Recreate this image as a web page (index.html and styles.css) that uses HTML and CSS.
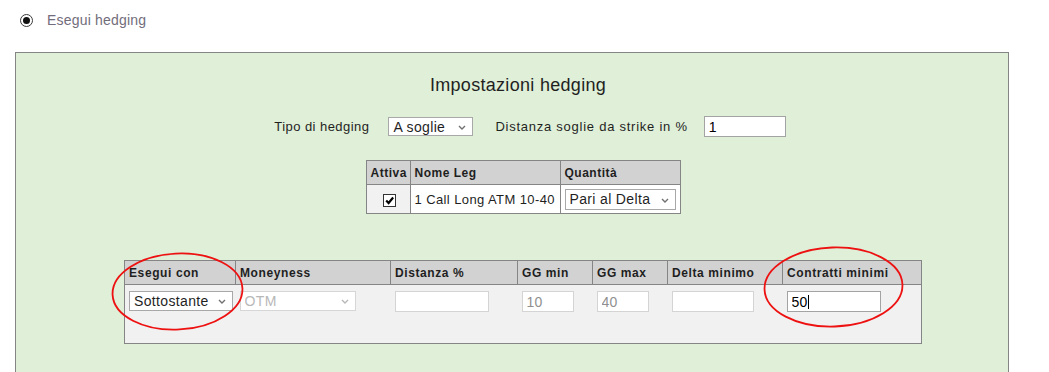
FILE: index.html
```html
<!DOCTYPE html>
<html lang="it">
  <head>
    <meta charset="UTF-8">
    <title>Impostazioni hedging</title>
    <link rel="stylesheet" href="styles.css">
  </head>
  <body>
    <div class="choice">
      <span class="radio"><span class="dot"></span></span>
      <span class="choice-label">Esegui hedging</span>
    </div>

    <div class="panel">
      <h2 class="panel-title">Impostazioni hedging</h2>

      <div class="settings-row">
        <span class="label">Tipo di hedging</span>
        <span class="select-box w-tipo">
          <select><option>A soglie</option></select>
          <svg class="chev" viewBox="0 0 8 5"><path d="M1 1 L4 4 L7 1" /></svg>
        </span>
        <span class="label wide">Distanza soglie da strike in %</span>
        <input class="text-input w-soglie" type="text" value="1">
      </div>

      <table class="legs">
        <thead>
          <tr>
            <th class="c-attiva">Attiva</th>
            <th class="c-nome">Nome Leg</th>
            <th class="c-qta">Quantità</th>
          </tr>
        </thead>
        <tbody>
          <tr>
            <td class="c-attiva check-cell">
              <span class="checkbox">
                <svg viewBox="0 0 10 10"><path d="M2 5 L4.2 7.3 L8.3 2.3" /></svg>
              </span>
            </td>
            <td class="c-nome">1 Call Long ATM 10-40</td>
            <td class="c-qta">
              <span class="select-box w-qta">
                <select><option>Pari al Delta</option></select>
                <svg class="chev" viewBox="0 0 8 5"><path d="M1 1 L4 4 L7 1" /></svg>
              </span>
            </td>
          </tr>
        </tbody>
      </table>

      <div class="hedge-wrap">
        <table class="hedge">
          <thead>
            <tr>
              <th class="h-esegui">Esegui con</th>
              <th class="h-money">Moneyness</th>
              <th class="h-dist">Distanza %</th>
              <th class="h-ggmin">GG min</th>
              <th class="h-ggmax">GG max</th>
              <th class="h-delta">Delta minimo</th>
              <th class="h-contr">Contratti minimi</th>
            </tr>
          </thead>
          <tbody>
            <tr>
              <td>
                <span class="select-box w-esegui">
                  <select><option>Sottostante</option></select>
                  <svg class="chev" viewBox="0 0 8 5"><path d="M1 1 L4 4 L7 1" /></svg>
                </span>
              </td>
              <td>
                <span class="select-box w-money disabled">
                  <select disabled><option>OTM</option></select>
                  <svg class="chev" viewBox="0 0 8 5"><path d="M1 1 L4 4 L7 1" /></svg>
                </span>
              </td>
              <td><input class="text-input light w-dist" type="text" value=""></td>
              <td><input class="text-input light muted w-gg" type="text" value="10" disabled></td>
              <td><input class="text-input light muted w-gg" type="text" value="40" disabled></td>
              <td><input class="text-input light w-delta" type="text" value=""></td>
              <td>
                <span class="caret-box">
                  <input class="text-input w-contr" type="text" value="50">
                  <span class="caret"></span>
                </span>
              </td>
            </tr>
          </tbody>
        </table>

        <!-- annotation marks drawn over the table -->
        <svg class="marks" viewBox="0 0 840 120" width="840" height="120">
          <ellipse cx="73.5" cy="51.5" rx="65" ry="38" transform="rotate(-3 73.5 51.5)" />
          <ellipse cx="729.5" cy="47" rx="69" ry="39.5" transform="rotate(-2 729.5 47)" />
        </svg>
      </div>
    </div>
  </body>
</html>
```

FILE: styles.css
```css
:root {
  --panel-bg: #dfefd8;
  --panel-border: #858585;
  --head-bg: #d2d2d2;
  --row-bg: #f1f1f1;
  --text: #1f1f1f;
}

html, body {
  margin: 0;
  padding: 0;
  background: #ffffff;
  color: var(--text);
  font-family: "Liberation Sans", Arial, sans-serif;
  font-size: 13px;
  overflow: hidden;
}

/* top radio choice */
.choice {
  display: flex;
  align-items: center;
  height: 24px;
  padding: 8px 0 0 20px;
}

.radio {
  width: 11px;
  height: 11px;
  border: 1px solid #3a3a3a;
  border-radius: 50%;
  display: flex;
  align-items: center;
  justify-content: center;
  background: #fff;
}

.radio .dot {
  width: 7px;
  height: 7px;
  border-radius: 50%;
  background: #111;
}

.choice-label {
  margin-left: 14px;
  font-size: 14px;
  letter-spacing: 0.2px;
  color: #726d7b;
}

/* green panel */
.panel {
  margin: 20px 0 0 15px;
  width: 994px;
  min-height: 330px;
  background: var(--panel-bg);
  border: 1px solid var(--panel-border);
  padding-left: 22px;
  box-sizing: border-box;
  display: flex;
  flex-direction: column;
  align-items: center;
}

.panel-title {
  margin: 22px 10px 0 0;
  font-size: 18px;
  font-weight: normal;
  letter-spacing: 0.3px;
  line-height: 21px;
}

.settings-row {
  display: flex;
  align-items: center;
  margin: 20px 0 0 14px;
  height: 21px;
}

.label {
  letter-spacing: 0.45px;
}

.label.wide {
  letter-spacing: 0.75px;
}

/* select look-alike */
.select-box {
  position: relative;
  display: inline-block;
  background: #fff;
  border: 1px solid #a8a8a8;
  height: 19px;
  box-sizing: border-box;
}

.select-box select {
  appearance: none;
  -webkit-appearance: none;
  border: none;
  background: transparent;
  font: inherit;
  font-size: 14px;
  letter-spacing: 0.35px;
  color: var(--text);
  width: 100%;
  height: 100%;
  padding: 0 0 0 4px;
  margin: 0;
  outline: none;
}

.select-box .chev {
  position: absolute;
  right: 6px;
  top: 7px;
  width: 8px;
  height: 5px;
  fill: none;
  stroke: #707070;
  stroke-width: 1.4;
}

.select-box.disabled {
  border-color: #d6d6d6;
}

.select-box.disabled select {
  color: #9a9a9a;
}

.select-box.disabled .chev {
  stroke: #b8b8b8;
}

.w-tipo { width: 85px; margin: 0 22px 0 19px; }
.w-qta { width: 111px; height: 21px; }
.w-qta .chev { top: 8px; }
.w-esegui { width: 104px; height: 20px; }
.w-money { width: 116px; height: 20px; }

/* text inputs */
.text-input {
  font: inherit;
  font-size: 14px;
  letter-spacing: 0.2px;
  color: #000;
  background: #fff;
  border: 1px solid #a3a3a3;
  height: 21px;
  box-sizing: border-box;
  padding: 0 0 0 4px;
  margin: 0;
  outline: none;
}

.text-input.light {
  border-color: #d4d4d4;
}

.text-input.muted {
  color: #8f8f8f;
}

.w-soglie { width: 82px; margin-left: 16px; }
.w-dist { width: 94px; }
.w-gg { width: 52px; }
.w-delta { width: 82px; }
.w-contr { width: 94px; }

.caret-box {
  position: relative;
  display: inline-block;
}

.caret {
  position: absolute;
  left: 21px;
  top: 4px;
  width: 1px;
  height: 14px;
  background: #000;
}

/* legs table */
table {
  border-collapse: collapse;
}

.legs {
  margin: 23px 0 0 0;
  border: 1px solid var(--panel-border);
  table-layout: fixed;
  width: 314px;
}

.legs th, .legs td {
  border: 1px solid var(--panel-border);
  padding: 0 4px;
  text-align: left;
  box-sizing: border-box;
}

.legs th {
  background: var(--head-bg);
  height: 24px;
  font-size: 12px;
  letter-spacing: 0.5px;
}

.legs td {
  background: #fff;
  height: 29px;
  white-space: nowrap;
  letter-spacing: 0.4px;
}

.legs td.check-cell {
  background: var(--row-bg);
  text-align: center;
  padding: 0 0 0 3px;
}

.c-attiva { width: 44px; }
.c-nome { width: 150px; }
.c-qta { width: 120px; }

.checkbox {
  display: inline-block;
  width: 11px;
  height: 11px;
  border: 1px solid #333;
  background: #fff;
  vertical-align: middle;
}

.checkbox svg {
  display: block;
  width: 11px;
  height: 11px;
  fill: none;
  stroke: #000;
  stroke-width: 2;
}

/* hedge table */
.hedge-wrap {
  position: relative;
  margin-top: 46px;
}

.hedge {
  border: 1px solid var(--panel-border);
  background: var(--row-bg);
}

.hedge th {
  background: var(--head-bg);
  border-left: 1px solid var(--panel-border);
  border-bottom: 1px solid var(--panel-border);
  height: 23px;
  padding: 0 4px;
  text-align: left;
  font-size: 12px;
  letter-spacing: 0.6px;
  white-space: nowrap;
}

.hedge td {
  vertical-align: top;
  padding: 6px 0 0 4px;
  height: 52px;
}

.h-esegui { width: 102px; }
.h-money { width: 146px; }
.h-dist { width: 118px; }
.h-ggmin { width: 66px; }
.h-ggmax { width: 66px; }
.h-delta { width: 106px; }
.h-contr { width: 130px; }

.marks {
  position: absolute;
  left: -20px;
  top: -20px;
  pointer-events: none;
}

.marks ellipse {
  fill: none;
  stroke: #ee1111;
  stroke-width: 1.8;
}
```
